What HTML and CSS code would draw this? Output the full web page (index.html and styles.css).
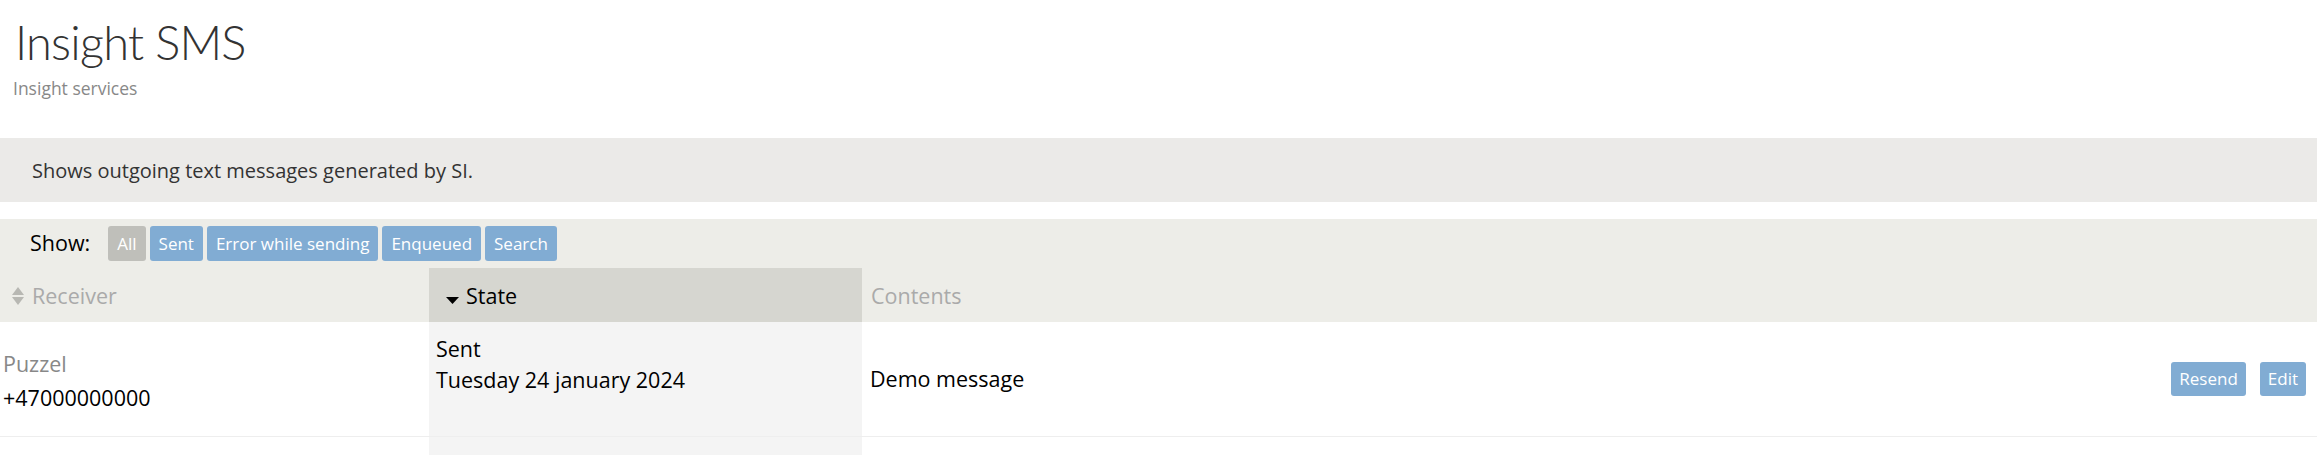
FILE: index.html
```html
<!DOCTYPE html>
<html>
<head>
<meta charset="utf-8">
<link rel="stylesheet" href="styles.css">
</head>
<body>
<header class="page-head">
  <h1 class="title">Insight SMS</h1>
  <div class="subtitle">Insight services</div>
</header>
<div class="info">Shows outgoing text messages generated by SI.</div>
<div class="filters">
  <span class="show-label">Show:</span>
  <span class="btn btn-grey">All</span>
  <span class="btn">Sent</span>
  <span class="btn">Error while sending</span>
  <span class="btn">Enqueued</span>
  <span class="btn">Search</span>
</div>
<table class="grid">
  <colgroup>
    <col class="w-receiver">
    <col class="w-state">
    <col>
    <col class="w-actions">
  </colgroup>
  <thead>
    <tr class="head-row">
      <th class="col-receiver"><span class="sort-both"><svg width="12" height="18" viewBox="0 0 12 18"><path d="M6 0 L12 8 L0 8 Z M6 18 L12 10 L0 10 Z" fill="#b8b8b3"/></svg></span>Receiver</th>
      <th class="col-state sorted"><span class="sort-down"><svg width="13" height="7" viewBox="0 0 13 7"><path d="M0 0 L13 0 L6.5 7 Z" fill="#000"/></svg></span>State</th>
      <th class="col-contents">Contents</th>
      <th class="col-actions"></th>
    </tr>
  </thead>
  <tbody>
    <tr class="data-row">
      <td class="cell-receiver"><div class="provider">Puzzel</div><div>+47000000000</div></td>
      <td class="cell-state"><div>Sent</div><div>Tuesday 24 january 2024</div></td>
      <td class="cell-contents">Demo message</td>
      <td class="cell-actions"><span class="btn btn-sm">Resend</span><span class="btn btn-sm">Edit</span></td>
    </tr>
    <tr class="filler">
      <td></td><td class="cell-state"></td><td></td><td></td>
    </tr>
  </tbody>
</table>
</body>
</html>
```
FILE: styles.css
```css
html, body {
  margin: 0;
  padding: 0;
  background: #fff;
}
body {
  font-family: "Open Sans", "Noto Sans", sans-serif;
  color: #000;
}
.page-head {
  padding: 14px 13px 0 13px;
  height: 124px;
  box-sizing: border-box;
}
.title {
  font-family: Lato, sans-serif;
  font-weight: 300;
  font-size: 47px;
  letter-spacing: -0.8px;
  line-height: 56px;
  margin: 0 0 0 2px;
  color: #333;
}
.subtitle {
  font-size: 17.5px;
  line-height: 24px;
  color: #888;
  margin-top: 6px;
}
.info {
  margin-top: 14px;
  height: 64px;
  box-sizing: border-box;
  background: #ebeae8;
  padding: 0 0 0 32px;
  display: flex;
  align-items: center;
  font-size: 20px;
  color: #333;
}
.filters {
  margin-top: 17px;
  background: #edede8;
  height: 49px;
  display: flex;
  align-items: center;
  gap: 4px;
  padding: 0 0 0 30px;
  box-sizing: border-box;
}
.show-label {
  font-size: 21.5px;
  margin-right: 14px;
  margin-top: -3px;
}
.btn {
  display: inline-flex;
  align-items: center;
  height: 35px;
  padding: 0 9px;
  background: #81acd3;
  color: #fff;
  border-radius: 3px;
  font-size: 17px;
  box-sizing: border-box;
}
.btn-grey {
  background: #bfbfba;
}
.grid {
  width: 100%;
  table-layout: fixed;
  border-collapse: collapse;
  border-spacing: 0;
}
.w-receiver { width: 429px; }
.w-state { width: 433px; }
.w-actions { width: 240px; }
.head-row {
  height: 54px;
}
.grid th {
  background: #edede8;
  text-align: left;
  font-weight: 400;
  font-size: 21.5px;
  color: #aaa;
  padding: 0 0 0 9px;
  vertical-align: middle;
  white-space: nowrap;
}
.grid th.col-receiver {
  padding-left: 12px;
}
.grid th.col-state {
  padding-left: 17px;
}
.grid th.sorted {
  background: #d6d6d0;
  color: #000;
}
.sort-both {
  display: inline-block;
  vertical-align: -1px;
  margin-right: 8px;
}
.sort-both svg, .sort-down svg {
  display: block;
}
.sort-down {
  display: inline-block;
  vertical-align: 0;
  margin-right: 7px;
}
.data-row {
  height: 114px;
}
.grid td {
  border-bottom: 1px solid #eee;
  font-size: 21.5px;
  padding: 0 0 0 8px;
  vertical-align: middle;
}
.grid td.cell-receiver {
  padding-left: 3px;
  line-height: 34px;
  padding-top: 5px;
}
.provider {
  color: #888;
}
.grid td.cell-state {
  background: #f4f4f4;
  vertical-align: top;
  padding-top: 11px;
  padding-left: 7px;
  line-height: 31px;
}
.grid td.cell-actions {
  text-align: right;
  padding-right: 11px;
  white-space: nowrap;
}
.btn-sm {
  height: 34px;
  padding: 0 8px;
  margin-left: 14px;
  font-size: 17px;
}
.filler {
  height: 19px;
}
.grid .filler td {
  border-bottom: none;
  padding: 0;
}
```
